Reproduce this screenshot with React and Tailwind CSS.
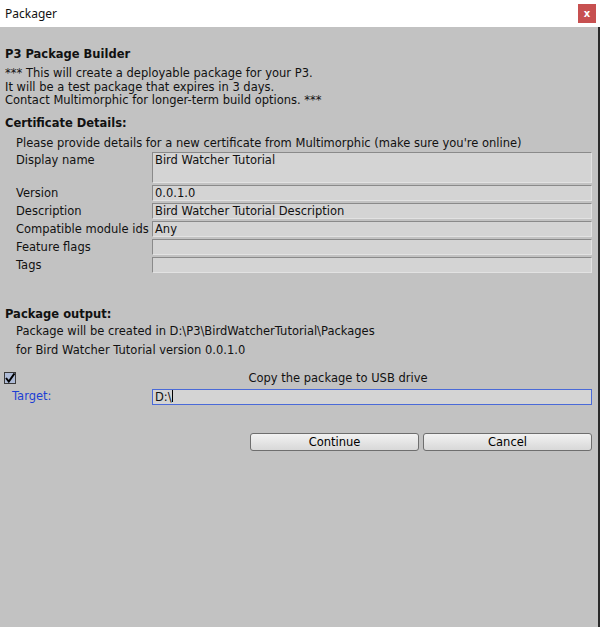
// Packager dialog
const font = { fontFamily: '"DejaVu Sans", Verdana, sans-serif' };

function Field({ label, value = '', tall = false }) {
  return (
    <div className={`flex items-start ${tall ? 'h-[33px]' : 'h-[18px]'}`}>
      <div className="w-[152px] shrink-0 pl-4 leading-[16px] whitespace-nowrap">{label}</div>
      <div
        className={`flex-1 mr-[6px] bg-[#d4d4d4] border border-[#8a8a8a] border-b-[#e2e2e2] border-r-[#e2e2e2] px-[2px] leading-[14px] ${tall ? 'h-[31px]' : 'h-[16px]'}`}
      >
        {value}
      </div>
    </div>
  );
}

function Button({ children }) {
  return (
    <button className="flex-1 h-[18px] rounded-[3px] border border-[#6e6e6e] bg-gradient-to-b from-[#f2f2f2] to-[#d8d8d8] text-[11.5px] text-black leading-[14px]">
      {children}
    </button>
  );
}

export default function App() {
  return (
    <div className="w-[600px] h-[627px] flex flex-col bg-[#c2c2c2] overflow-hidden" style={font}>
      <div className="h-[27px] bg-white flex items-center justify-between pl-[5px] pr-[4px] shrink-0">
        <span className="text-[12px] text-[#111]" style={{ fontFamily: '"Noto Sans", "Open Sans", sans-serif' }}>Packager</span>
        <div className="w-[18px] h-[19px] bg-[#c75050] flex items-center justify-center text-white text-[10px] font-bold leading-none">
          x
        </div>
      </div>
      <div className="flex-1 flex">
        <div className="flex-1 text-[11.5px] text-[#111] pt-[20px]">
          <div className="pl-[5px] font-bold leading-[15px]">P3 Package Builder</div>
          <div className="pl-[5px] mt-[5px] leading-[13.5px]">
            <div>*** This will create a deployable package for your P3.</div>
            <div>It will be a test package that expires in 3 days.</div>
            <div>Contact Multimorphic for longer-term build options. ***</div>
          </div>
          <div className="pl-[5px] mt-[8px] font-bold leading-[15px]">Certificate Details:</div>
          <div className="pl-4 mt-[5px] leading-[14px] whitespace-nowrap">
            Please provide details for a new certificate from Multimorphic (make sure you're online)
          </div>
          <div className="mt-[2px] flex flex-col">
            <Field label="Display name" value="Bird Watcher Tutorial" tall />
            <Field label="Version" value="0.0.1.0" />
            <Field label="Description" value="Bird Watcher Tutorial Description" />
            <Field label="Compatible module ids" value="Any" />
            <Field label="Feature flags" />
            <Field label="Tags" />
          </div>
          <div className="pl-[5px] mt-[32px] font-bold leading-[15px]">Package output:</div>
          <div className="pl-4 leading-[19px]">
            <div>Package will be created in D:\P3\BirdWatcherTutorial\Packages</div>
            <div>for Bird Watcher Tutorial version 0.0.1.0</div>
          </div>
          <div className="mt-[11px] flex items-center h-[14px]">
            <div className="ml-[4px] w-[12px] h-[12px] bg-[#aebbd6] border border-[#3a3a3a] flex items-center justify-center">
              <svg width="10" height="10" viewBox="0 0 10 10">
                <path d="M1 5 L3.8 8.5 L9.5 0.5" fill="none" stroke="#000" strokeWidth="2" />
              </svg>
            </div>
            <div className="flex-1 text-center pl-[62px] leading-[14px]">Copy the package to USB drive</div>
          </div>
          <div className="mt-[3px] flex items-center h-[18px]">
            <div className="w-[152px] shrink-0 pl-[12px] text-[#1c3fd4]">Target:</div>
            <div className="flex-1 mr-[6px] h-[16px] bg-[#d4d4d4] border border-[#4a6ad8] px-[2px] leading-[14px]">
              D:\<span className="inline-block w-px h-[12px] bg-black align-middle -mt-[2px]" />
            </div>
          </div>
          <div className="mt-[27px] flex gap-[4px] pl-[250px] pr-[6px]">
            <Button>Continue</Button>
            <Button>Cancel</Button>
          </div>
        </div>
        <div className="w-[2px] bg-[#2a2a2a]" />
      </div>
    </div>
  );
}
